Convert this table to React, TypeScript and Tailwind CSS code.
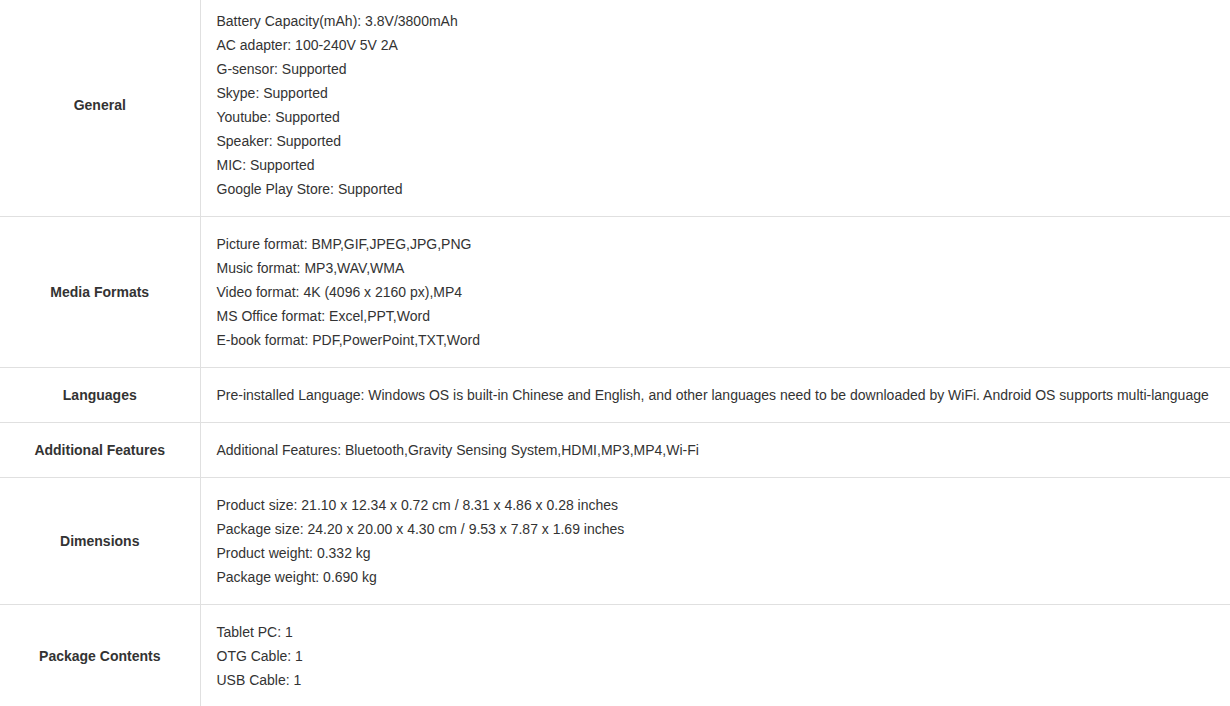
import React from 'react';

interface SpecRow {
  label: string;
  lines: string[];
}

const specs: SpecRow[] = [
  {
    label: 'General',
    lines: [
      'Battery Capacity(mAh): 3.8V/3800mAh',
      'AC adapter: 100-240V 5V 2A',
      'G-sensor: Supported',
      'Skype: Supported',
      'Youtube: Supported',
      'Speaker: Supported',
      'MIC: Supported',
      'Google Play Store: Supported',
    ],
  },
  {
    label: 'Media Formats',
    lines: [
      'Picture format: BMP,GIF,JPEG,JPG,PNG',
      'Music format: MP3,WAV,WMA',
      'Video format: 4K (4096 x 2160 px),MP4',
      'MS Office format: Excel,PPT,Word',
      'E-book format: PDF,PowerPoint,TXT,Word',
    ],
  },
  {
    label: 'Languages',
    lines: [
      'Pre-installed Language: Windows OS is built-in Chinese and English, and other languages need to be downloaded by WiFi. Android OS supports multi-language',
    ],
  },
  {
    label: 'Additional Features',
    lines: ['Additional Features: Bluetooth,Gravity Sensing System,HDMI,MP3,MP4,Wi-Fi'],
  },
  {
    label: 'Dimensions',
    lines: [
      'Product size: 21.10 x 12.34 x 0.72 cm / 8.31 x 4.86 x 0.28 inches',
      'Package size: 24.20 x 20.00 x 4.30 cm / 9.53 x 7.87 x 1.69 inches',
      'Product weight: 0.332 kg',
      'Package weight: 0.690 kg',
    ],
  },
  {
    label: 'Package Contents',
    lines: ['Tablet PC: 1', 'OTG Cable: 1', 'USB Cable: 1'],
  },
];

const App: React.FC = () => {
  return (
    <div className="w-[1230px] h-[706px] overflow-hidden bg-white font-['Liberation_Sans',Arial,sans-serif] text-[14px] text-[#333]">
      <table className="-mt-[7px] w-full border-collapse">
        <tbody>
          {specs.map((row) => (
            <tr key={row.label} className="border-y border-[#e0e0e0]">
              <td className="w-[200px] border-r border-[#e0e0e0] text-center align-middle font-bold leading-6">
                {row.label}
              </td>
              <td className="py-[15px] pl-4 pr-2 leading-6 whitespace-nowrap">
                {row.lines.map((line) => (
                  <div key={line}>{line}</div>
                ))}
              </td>
            </tr>
          ))}
        </tbody>
      </table>
    </div>
  );
};

export default App;
